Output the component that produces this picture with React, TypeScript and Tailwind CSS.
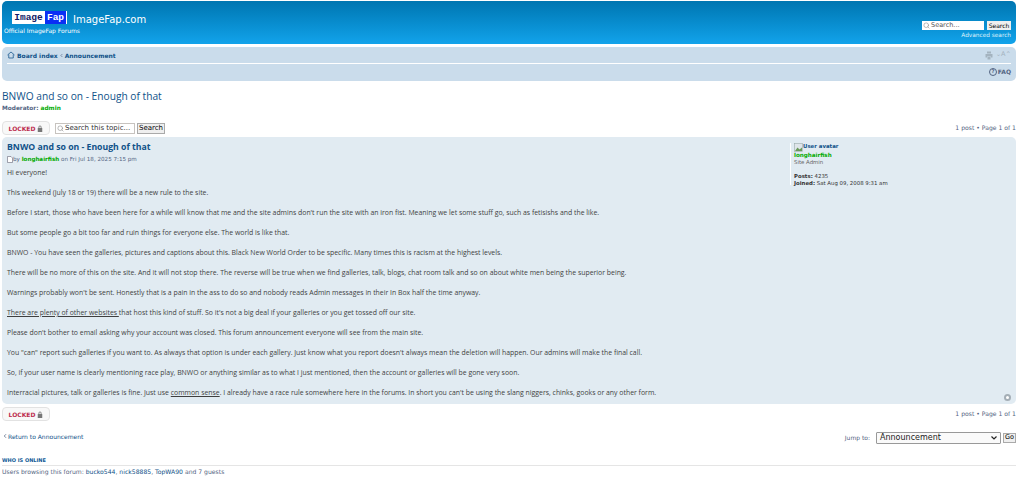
import { ChevronLeft, Search } from "lucide-react";

const sans = "font-['DejaVu_Sans',sans-serif]";

function LockIcon() {
  return (
    <svg width="6" height="7" viewBox="0 0 12 14" fill="#777">
      <path d="M3 6V4a3 3 0 0 1 6 0v2h1.5v8h-9V6zm1.6 0h2.8V4a1.4 1.4 0 0 0-2.8 0z" />
    </svg>
  );
}

function LockedButton() {
  return (
    <div className="flex h-[14px] w-[48px] items-center justify-center gap-[2px] rounded-[4px] border border-[#e2e2e2] bg-[#f8f8f8] text-[6px] font-bold text-[#bc2a4d]">
      LOCKED <LockIcon />
    </div>
  );
}

function Pagination() {
  return <div className="text-[6.1px] text-[#536482]">1 post • Page 1 of 1</div>;
}

function App() {
  return (
    <div className={`${sans} h-[477px] w-[1024px] overflow-hidden bg-white pl-[2px] pr-[8px] pt-px text-[#536482]`}>
      {/* header */}
      <header className="flex h-[43px] justify-between rounded-[5px] bg-gradient-to-b from-[#0076b1] to-[#12a3eb] pl-[2px] pr-[5px] text-white">
        <div className="pt-[8px]">
          <div className="flex items-center pl-[8px]">
            <div className="flex h-[13px] w-[55px] border-r border-white font-['Liberation_Mono',monospace] text-[9.5px] font-bold leading-[13px]">
              <span className="w-[33px] bg-white text-center text-[#111a66]">Image</span>
              <span className="w-[21px] bg-[#0b2ff5] text-center text-white">Fap</span>
            </div>
            <span className="ml-[6px] mt-[4px] text-[10px] leading-[13px]">ImageFap.com</span>
          </div>
          <div className="mt-px text-[6px] leading-[8px]">Official ImageFap Forums</div>
        </div>
        <div className="flex flex-col items-end pt-[20px]">
          <div className="flex items-center gap-[3px]">
            <div className="flex h-[9px] w-[62px] items-center bg-white pl-px text-[6.5px] text-[#555]">
              <Search size={7} className="mr-px text-[#888]" /> Search...
            </div>
            <div className="flex h-[9px] w-[24px] items-center justify-center bg-[#efefef] text-[6px] text-black">Search</div>
          </div>
          <div className="text-[5.8px] leading-[10px] text-[#dff2fb]">Advanced search</div>
        </div>
      </header>

      {/* navbar */}
      <nav className="mt-[3px] h-[34px] rounded-[5px] bg-[#cadceb] px-[5px] text-[6px] font-bold text-[#105289]">
        <div className="flex h-[17px] items-center justify-between border-b border-white">
          <div className="flex items-center gap-[1px]">
            <svg width="8" height="8" viewBox="0 0 16 16" fill="none" stroke="#105289" strokeWidth="1.5" className="mr-px">
              <path d="M1 8 8 2l7 6M3.5 7v7h9V7" />
            </svg>
            <span>Board index</span>
            <ChevronLeft size={5} strokeWidth={3} className="text-[#536482]" />
            <span>Announcement</span>
          </div>
          <div className="flex items-center gap-[3px] font-normal text-[#a4b3bf]">
            <svg width="8" height="9" viewBox="0 0 16 18" fill="#a4b3bf">
              <path d="M4 1h8v4H4zM1 6h14v7h-3v-2H4v2H1zM5 12h6v5H5z" />
            </svg>
            <span className="text-[6.5px]">⌄A⌃</span>
          </div>
        </div>
        <div className="flex h-[15px] items-center justify-end gap-px text-[#536482]">
          <span className="flex h-[8px] w-[8px] items-center justify-center rounded-full border border-[#536482] text-[5px]">?</span>
          FAQ
        </div>
      </nav>

      {/* title */}
      <h2 className="mt-[8px] font-['Open_Sans',sans-serif] text-[10.2px] font-normal leading-[14px] text-[#105289]">
        BNWO and so on - Enough of that
      </h2>
      <div className="text-[5.8px] font-bold leading-[10px]">
        Moderator: <span className="text-[#00aa00]">admin</span>
      </div>

      <div className="mt-[8px] flex h-[14px] items-center justify-between">
        <div className="flex items-center">
          <LockedButton />
          <div className="ml-[5px] flex h-[11px] w-[80px] items-center border border-[#c7c3bf] bg-white pl-px text-[7px] text-[#333]">
            <Search size={7} className="mr-px text-[#888]" /> Search this topic...
          </div>
          <div className="ml-[2px] flex h-[11px] w-[28px] items-center justify-center border border-[#aaa] bg-[#efefef] text-[7px] text-black">Search</div>
        </div>
        <Pagination />
      </div>

      {/* post */}
      <article className="mt-[2px] flex h-[267px] rounded-[5px] bg-[#e1ebf2] pl-[5px] pr-[5px]">
        <div className="flex-1 pt-[4px]">
          <h3 className="font-['Open_Sans',sans-serif] text-[8.7px] font-bold leading-[12px] text-[#105289]">BNWO and so on - Enough of that</h3>
          <div className="mt-px flex items-center text-[5.6px] leading-[10px]">
            <svg width="6" height="7" viewBox="0 0 6 7" fill="#fff" stroke="#667" strokeWidth="0.6">
              <path d="M.5.5h3.5l1.5 1.5v4.5h-5z" />
            </svg>
            <span>by <span className="font-bold text-[#00aa00]">longhairfish</span> on Fri Jul 18, 2025 7:15 pm</span>
          </div>
          <div className="mt-[5px] flex flex-col gap-[12px] font-['Open_Sans',sans-serif] text-[6.9px] leading-[8px] text-[#3f3f3f]">
            <p>Hi everyone!</p>
            <p>This weekend (July 18 or 19) there will be a new rule to the site.</p>
            <p>Before I start, those who have been here for a while will know that me and the site admins don't run the site with an iron fist. Meaning we let some stuff go, such as fetisishs and the like.</p>
            <p>But some people go a bit too far and ruin things for everyone else. The world is like that.</p>
            <p>BNWO - You have seen the galleries, pictures and captions about this. Black New World Order to be specific. Many times this is racism at the highest levels.</p>
            <p>There will be no more of this on the site. And it will not stop there. The reverse will be true when we find galleries, talk, blogs, chat room talk and so on about white men being the superior being.</p>
            <p>Warnings probably won't be sent. Honestly that is a pain in the ass to do so and nobody reads Admin messages in their In Box half the time anyway.</p>
            <p><span className="underline">There are plenty of other websites </span>that host this kind of stuff. So it's not a big deal if your galleries or you get tossed off our site.</p>
            <p>Please don't bother to email asking why your account was closed. This forum announcement everyone will see from the main site.</p>
            <p>You "can" report such galleries if you want to. As always that option is under each gallery. Just know what you report doesn't always mean the deletion will happen. Our admins will make the final call.</p>
            <p>So, if your user name is clearly mentioning race play, BNWO or anything similar as to what I just mentioned, then the account or galleries will be gone very soon.</p>
            <p>Interracial pictures, talk or galleries is fine. Just use <span className="underline">common sense</span>. I already have a race rule somewhere here in the forums. In short you can't be using the slang niggers, chinks, gooks or any other form.</p>
          </div>
        </div>
        <aside className="ml-[5px] mt-[6px] h-[42px] w-[221px] border-l border-white pl-[3px] text-[5.4px] leading-[7px] text-[#333]">
          <div className="flex h-[7px] items-center gap-0 text-[5.4px] font-bold text-[#105289]">
            <svg width="9" height="9" viewBox="0 0 9 9" className="-mb-[2px]">
              <rect x="0.5" y="0.5" width="8" height="8" fill="#dfe5ea" stroke="#9aa" strokeWidth="0.6" />
              <path d="M1 8 3.5 4.5l2 2 2.500-2V8z" fill="#6a9a5a" />
            </svg>
            User avatar
          </div>
          <div className="mt-[2px] text-[5.6px] font-bold text-[#00aa00]">longhairfish</div>
          <div className="text-[#666]">Site Admin</div>
          <div className="mt-[7px]"><b>Posts:</b> 4235</div>
          <div><b>Joined:</b> Sat Aug 09, 2008 9:31 am</div>
        </aside>
        <div className="relative">
          <span className="absolute bottom-[3px] right-0 flex h-[7px] w-[7px] items-center justify-center rounded-full bg-[#a4aeb6]">
            <span className="h-[3px] w-[3px] rounded-full bg-white" />
          </span>
        </div>
      </article>

      <div className="mt-[3px] flex h-[14px] items-center justify-between">
        <LockedButton />
        <Pagination />
      </div>

      <div className="mt-[9px] flex h-[15px] items-center justify-between">
        <div className="mb-[3px] flex items-center text-[6px] text-[#105289]">
          <ChevronLeft size={6} strokeWidth={3} className="text-[#536482]" /> Return to Announcement
        </div>
        <div className="flex items-center text-[6px]">
          Jump to:
          <div className="ml-[6px] flex h-[12px] w-[125px] items-center justify-between rounded-[1px] border border-[#999] bg-[#fafafa] px-[3px] text-[8px] text-[#222]">
            Announcement
            <svg width="6" height="4" viewBox="0 0 6 4" fill="none" stroke="#222" strokeWidth="1.2">
              <path d="M.5.5 3 3 5.500.5" />
            </svg>
          </div>
          <div className="ml-[2px] flex h-[10px] w-[13px] items-center justify-center border border-[#aaa] bg-[#efefef] text-[6.5px] text-black">Go</div>
        </div>
      </div>

      <div className="mt-[11px] border-b border-[#e5e5e5] text-[5px] font-bold leading-[9px] text-[#115a96]">WHO IS ONLINE</div>
      <div className="text-[6.1px] leading-[12px]">
        Users browsing this forum: <span className="text-[#105289]">bucko544</span>, <span className="text-[#105289]">nick58885</span>, <span className="text-[#105289]">TopWA90</span> and 7 guests
      </div>
    </div>
  );
}

export default App;
